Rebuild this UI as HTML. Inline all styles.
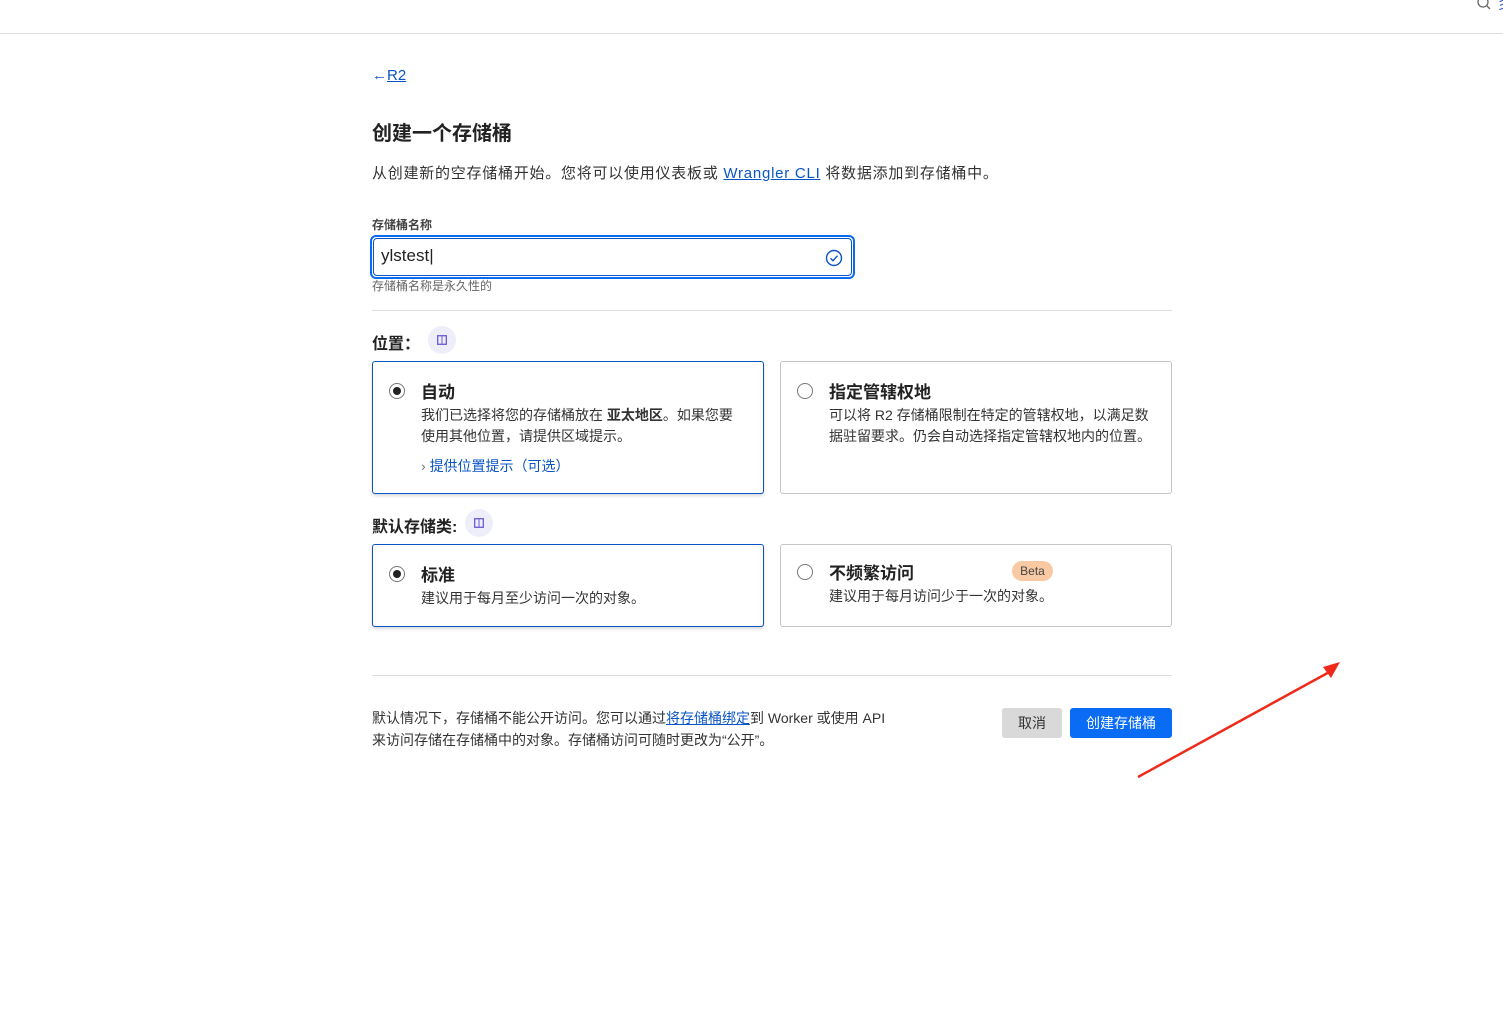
<!DOCTYPE html>
<html><head><meta charset="utf-8"><style>
*{box-sizing:border-box;margin:0;padding:0}
body{width:1503px;height:1021px;background:#fff;font-family:"Liberation Sans","Noto Sans CJK SC",sans-serif;color:#313131;position:relative;overflow:hidden}
.a{position:absolute}
.card{position:absolute;border:1px solid #c5c5c5;border-radius:3px;background:#fff}
.card.sel{border-color:#0a55c6;box-shadow:0 2px 3px rgba(0,0,0,.15)}
.radio{position:absolute;width:16px;height:16px;border:1px solid #777;border-radius:50%}
.radio.on::after{content:"";position:absolute;left:3px;top:3px;width:8px;height:8px;border-radius:50%;background:#222}
.t{position:absolute;font-size:17px;font-weight:bold;color:#222}
.d{position:absolute;font-size:14px;line-height:21px;color:#333}
.info{position:absolute;width:28px;height:28px;border-radius:50%;background:#eeeefb}
.info svg{position:absolute;left:9px;top:9px}
</style></head><body>
<div class="a" style="left:0;top:33px;width:1503px;height:1px;background:#ddd"></div>
<svg class="a" style="left:1477px;top:-4px" width="14" height="14"><circle cx="6" cy="6" r="5" fill="none" stroke="#666" stroke-width="1.3"/><line x1="10" y1="10" x2="13" y2="13" stroke="#666" stroke-width="1.3"/></svg>
<div class="a" style="left:1497px;top:-6px;font-size:13px;color:#3355cc">彡</div>

<div class="a" style="left:372px;top:67px;font-size:15px;color:#0a55c6">←<span style="text-decoration:underline">R2</span></div>
<div class="a" style="left:372px;top:117px;font-size:20px;font-weight:bold;color:#222">创建一个存储桶</div>
<div class="a" style="left:372px;top:162px;font-size:15px;letter-spacing:0.75px;color:#333">从创建新的空存储桶开始。您将可以使用仪表板或 <span style="color:#0a55c6;text-decoration:underline">Wrangler CLI</span> 将数据添加到存储桶中。</div>
<div class="a" style="left:372px;top:216px;font-size:12px;font-weight:bold;color:#444">存储桶名称</div>
<div class="a" style="left:370px;top:235px;width:485px;height:44px;border:2px solid #0a6cf5;border-radius:6px"><div style="position:absolute;left:1px;top:1px;right:1px;bottom:1px;border:1px solid #0a55c6;border-radius:4px"></div></div>
<div class="a" style="left:381px;top:246px;font-size:17px;color:#222">ylstest<span style="font-weight:100">|</span></div>
<svg class="a" style="left:825px;top:249px" width="18" height="18"><circle cx="9" cy="9" r="7.5" fill="none" stroke="#0a55c6" stroke-width="1.4"/><path d="M5.5 9.2l2.5 2.5 4.5-5" fill="none" stroke="#0a55c6" stroke-width="1.4"/></svg>
<div class="a" style="left:372px;top:277px;font-size:12px;color:#666">存储桶名称是永久性的</div>
<div class="a" style="left:372px;top:310px;width:800px;height:1px;background:#ddd"></div>

<div class="a" style="left:372px;top:330px;font-size:16px;font-weight:bold;color:#222">位置：</div>
<div class="info" style="left:428px;top:326px"><svg width="10" height="10"><rect x="0.7" y="0.7" width="8.6" height="8.6" fill="none" stroke="#6a5bd0" stroke-width="1.3"/><line x1="5" y1="1" x2="5" y2="9" stroke="#6a5bd0"/></svg></div>
<div class="card sel" style="left:372px;top:361px;width:392px;height:133px"></div>
<div class="radio on" style="left:389px;top:383px"></div>
<div class="t" style="left:421px;top:378px">自动</div>
<div class="d" style="left:421px;top:405px">我们已选择将您的存储桶放在 <b>亚太地区</b>。如果您要<br>使用其他位置，请提供区域提示。</div>
<div class="d" style="left:421px;top:456px;color:#0a55c6"><span style="color:#777">› </span>提供位置提示（可选）</div>
<div class="card" style="left:780px;top:361px;width:392px;height:133px"></div>
<div class="radio" style="left:797px;top:383px"></div>
<div class="t" style="left:829px;top:378px">指定管辖权地</div>
<div class="d" style="left:829px;top:405px">可以将 R2 存储桶限制在特定的管辖权地，以满足数<br>据驻留要求。仍会自动选择指定管辖权地内的位置。</div>

<div class="a" style="left:372px;top:513px;font-size:16px;font-weight:bold;color:#222">默认存储类:</div>
<div class="info" style="left:465px;top:509px"><svg width="10" height="10"><rect x="0.7" y="0.7" width="8.6" height="8.6" fill="none" stroke="#6a5bd0" stroke-width="1.3"/><line x1="5" y1="1" x2="5" y2="9" stroke="#6a5bd0"/></svg></div>
<div class="card sel" style="left:372px;top:544px;width:392px;height:83px"></div>
<div class="radio on" style="left:389px;top:566px"></div>
<div class="t" style="left:421px;top:561px">标准</div>
<div class="d" style="left:421px;top:588px">建议用于每月至少访问一次的对象。</div>
<div class="card" style="left:780px;top:544px;width:392px;height:83px"></div>
<div class="radio" style="left:797px;top:564px"></div>
<div class="t" style="left:829px;top:559px">不频繁访问</div>
<div class="a" style="left:1012px;top:561px;width:41px;height:20px;border-radius:10px;background:#f8c9a3;font-size:12px;text-align:center;line-height:20px;color:#444">Beta</div>
<div class="d" style="left:829px;top:586px">建议用于每月访问少于一次的对象。</div>

<div class="a" style="left:372px;top:675px;width:800px;height:1px;background:#ddd"></div>
<div class="d" style="left:372px;top:707px;line-height:22px">默认情况下，存储桶不能公开访问。您可以通过<span style="color:#0a55c6;text-decoration:underline">将存储桶绑定</span>到 Worker 或使用 API<br>来访问存储在存储桶中的对象。存储桶访问可随时更改为“公开”。</div>
<div class="a" style="left:1002px;top:708px;width:60px;height:30px;background:#d9d9d9;border-radius:3px;font-size:14px;text-align:center;line-height:30px;color:#333">取消</div>
<div class="a" style="left:1070px;top:708px;width:102px;height:30px;background:#0a6cf5;border-radius:3px;font-size:14px;text-align:center;line-height:30px;color:#fff">创建存储桶</div>
<svg class="a" style="left:1130px;top:655px" width="220" height="130"><path d="M8 122 L203 15" stroke="#f02a1a" stroke-width="2.5" fill="none"/><path d="M210 7 L193 12 L201 23 Z" fill="#f02a1a"/></svg>
</body></html>
